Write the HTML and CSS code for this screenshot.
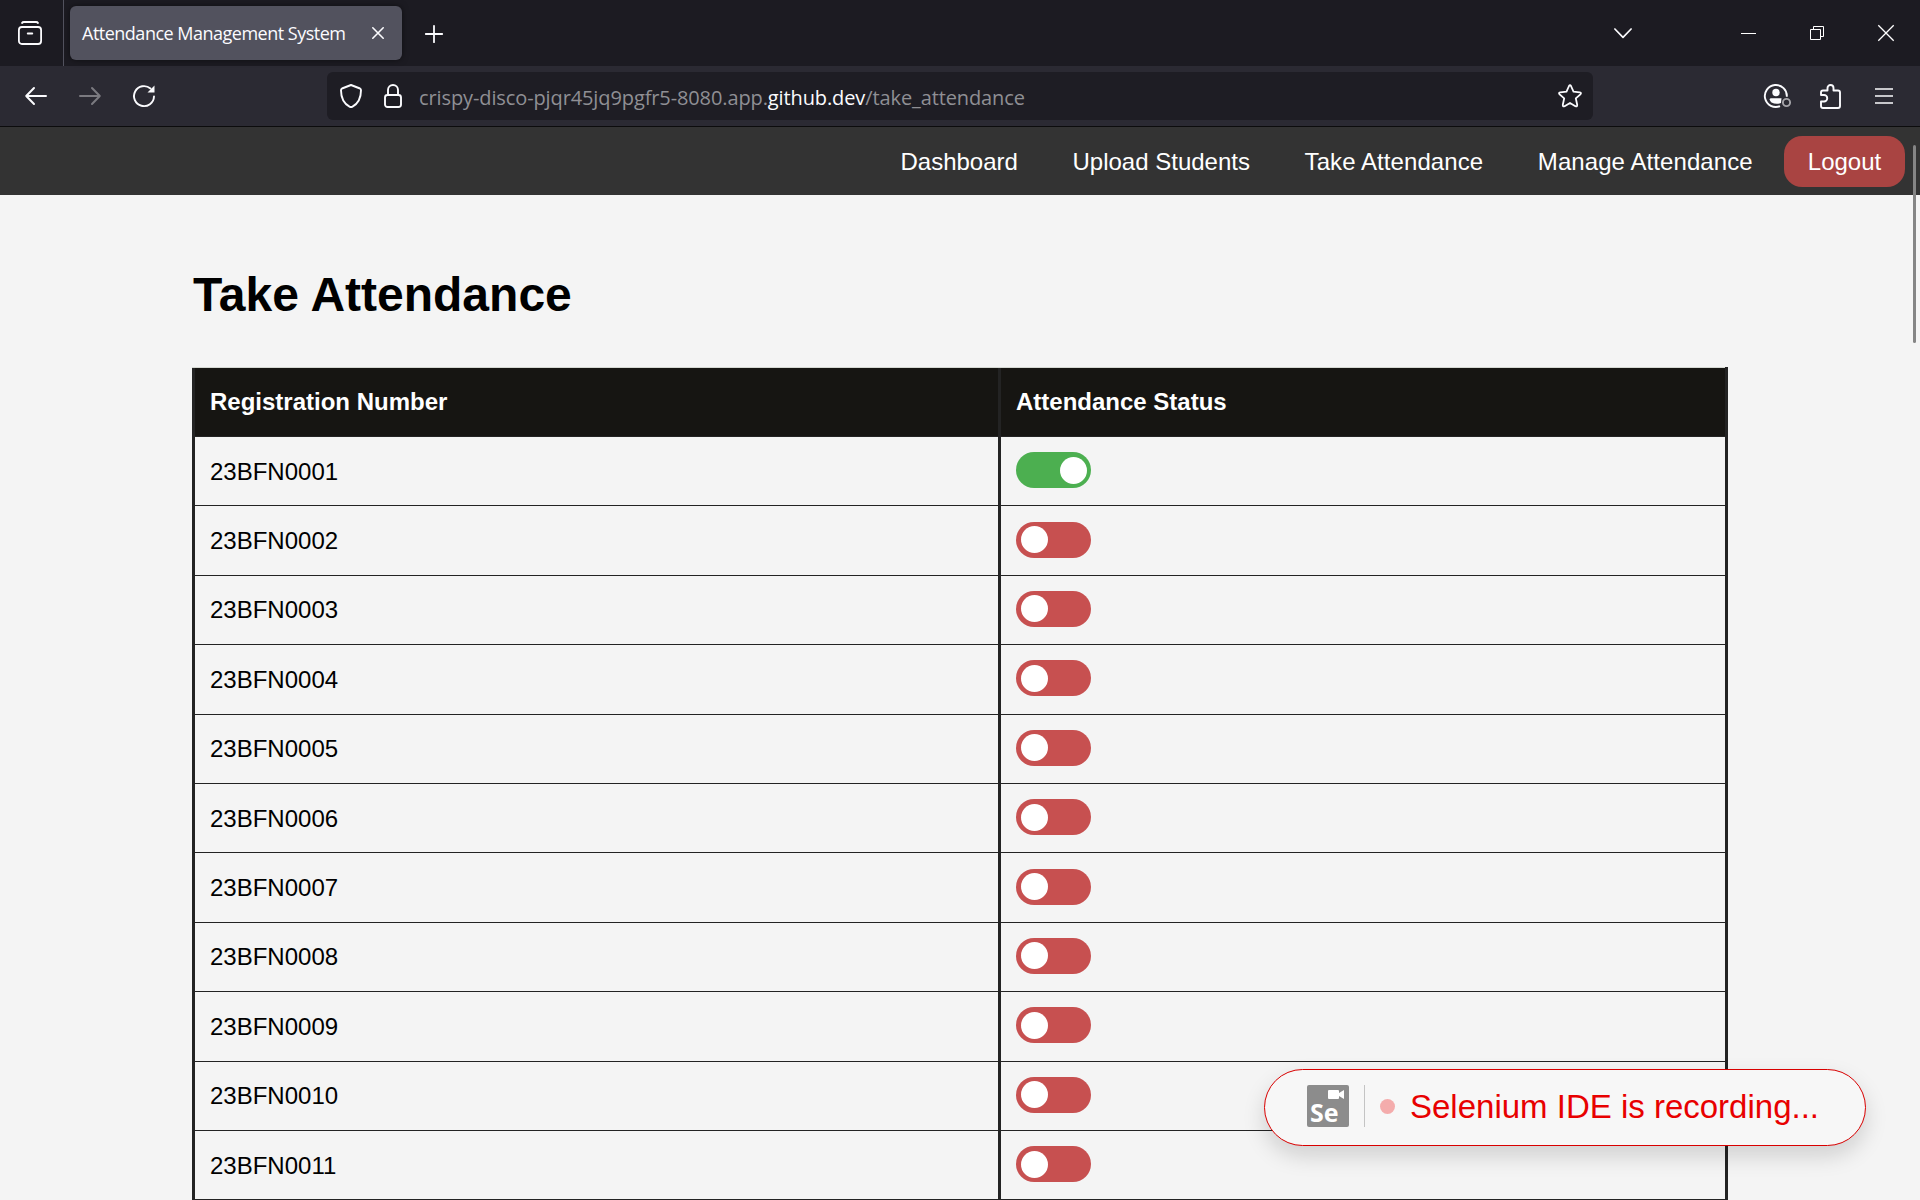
FILE: index.html
```html
<!DOCTYPE html>
<html lang="en">
<head>
<meta charset="utf-8">
<title>Attendance Management System</title>
<link rel="stylesheet" href="styles.css">
</head>
<body>
<div class="tabstrip">
  <div class="overview">
    <svg width="24" height="24" viewBox="0 0 24 24" fill="none" stroke="#fbfbfe" stroke-width="1.8" stroke-linecap="round"><path d="M4 2Q4.500 1 6 1H18Q19.500 1 20 2"/><rect x="0.900" y="6" width="22.200" height="17" rx="3"/><path d="M9.800 12.500H14.200" stroke-width="2"/></svg>
  </div>
  <div class="tab">
    <span class="tab-title">Attendance Management System</span>
    <svg width="12" height="12" viewBox="0 0 12 12" stroke="#fbfbfe" stroke-width="1.600" stroke-linecap="round"><path d="M0.800 0.800L11.200 11.200M11.200 0.800L0.800 11.200"/></svg>
  </div>
  <svg class="newtab" width="18" height="18" viewBox="0 0 18 18" stroke="#fbfbfe" stroke-width="1.800" stroke-linecap="round"><path d="M9 0.800V17.200M0.800 9H17.200"/></svg>
  <div class="window-controls">
    <svg width="18" height="11" viewBox="0 0 18 11" fill="none" stroke="#fbfbfe" stroke-width="1.700" stroke-linecap="round" stroke-linejoin="round"><path d="M0.900 1L9 9.300L17.100 1"/></svg>
    <svg class="minimize" width="15" height="1" viewBox="0 0 15 1"><path d="M0 0H15V1H0Z" fill="#fff"/></svg>
    <svg class="restore" width="14" height="14" viewBox="0 0 14 14" fill="none" stroke="#fff"><path d="M0.500 3.500H10.500V13.500H0.500ZM3.500 3.500V0.500H13.500V10.500H10.500"/></svg>
    <svg class="close" width="16" height="16" viewBox="0 0 16 16" stroke="#fff" stroke-width="1.300"><path d="M0.300 0.300L15.700 15.700M15.700 0.300L0.300 15.700"/></svg>
  </div>
</div>
<div class="toolbar">
  <div class="history">
    <svg width="22" height="18" viewBox="0 0 22 18" fill="none" stroke="#fbfbfe" stroke-width="2" stroke-linecap="round" stroke-linejoin="round"><path d="M21 9H1.200M9 1L1.200 9L9 17"/></svg>
    <svg width="22" height="18" viewBox="0 0 22 18" fill="none" stroke="#7b7a80" stroke-width="2" stroke-linecap="round" stroke-linejoin="round"><path d="M1 9H20.800M13 1L20.800 9L13 17"/></svg>
    <svg width="22" height="22" viewBox="0 0 22 22" fill="none" stroke="#fbfbfe" stroke-width="1.900" stroke-linecap="round"><path d="M21 11.500A10 10 0 1 1 17.500 3.500"/><path d="M21.500 0.500V7.500H14.500Z" fill="#fbfbfe" stroke="none"/></svg>
  </div>
  <div class="urlbar">
    <svg width="22" height="24" viewBox="0 0 22 24" fill="none" stroke="#fbfbfe" stroke-width="1.900" stroke-linejoin="round"><path d="M11 1L20 4.500Q21 5 21 6.200C21 14 18 19.500 12.500 22.600Q11 23.400 9.500 22.600C4 19.500 1 14 1 6.200Q1 5 2 4.500Z"/></svg>
    <svg class="lock" width="18" height="24" viewBox="0 0 18 24" fill="none" stroke="#fbfbfe" stroke-width="1.900"><rect x="1" y="11" width="16" height="12" rx="2.500"/><path d="M4 11V6A5 5 0 0 1 14 6V11"/></svg>
    <div class="url">crispy-disco-pjqr45jq9pgfr5-8080.app.<b>github.dev</b>/take_attendance</div>
    <svg class="star" width="24" height="24" viewBox="0 0 24 24" fill="none" stroke="#fbfbfe" stroke-width="1.800" stroke-linejoin="round"><path d="M11 2Q12 0.200 13 2L15.500 7.700L21.800 8.300Q23.800 8.800 22.400 10.300L17.800 14.400L19.200 20.800Q19.400 23 17.400 22.200L12 18.900L6.600 22.200Q4.600 23 4.800 20.800L6.200 14.400L1.600 10.300Q0.200 8.800 2.200 8.300L8.500 7.700Z"/></svg>
  </div>
  <div class="actions">
    <svg width="28" height="26" viewBox="0 0 28 26" fill="none" stroke="#fbfbfe" stroke-width="1.900"><path d="M16 23.200A11 11 0 1 1 22.800 13.800"/><circle cx="12" cy="9.500" r="3.700" fill="#fbfbfe" stroke="none"/><path d="M5.500 16.300Q6 15.300 7 15.300H17.500L17 20Q12 22 7.500 19.400Q6 18.300 5.500 16.300Z" fill="#fbfbfe" stroke="none"/><circle cx="22.500" cy="19.500" r="3.600" stroke="#a5a4a9"/></svg>
    <svg class="puzzle" width="21" height="25" viewBox="0 0 21 25" fill="none" stroke="#fbfbfe" stroke-width="1.900" stroke-linejoin="round"><path d="M1 11V8.500Q1 6.500 3 6.500H7.500V4A3 3 0 0 1 13.500 4V6.500H18Q20 6.500 20 8.500V22Q20 24 18 24H3Q1 24 1 22V17.500H4A3.200 3.200 0 0 0 4 11Z"/></svg>
    <svg class="menu" width="18" height="16" viewBox="0 0 18 16" stroke="#fbfbfe" stroke-width="1.700"><path d="M0 1H18M0 8H18M0 15H18"/></svg>
  </div>
</div>
<nav class="nav">
  <a>Dashboard</a><a>Upload Students</a><a class="wide">Take Attendance</a><a class="wide">Manage Attendance</a><a class="logout">Logout</a>
</nav>
<main class="content">
  <h1>Take Attendance</h1>
  <div class="sheet">
    <div class="row head"><div>Registration Number</div><div>Attendance Status</div></div>
    <div class="row"><div>23BFN0001</div><div><span class="switch on"></span></div></div>
    <div class="row"><div>23BFN0002</div><div><span class="switch"></span></div></div>
    <div class="row"><div>23BFN0003</div><div><span class="switch"></span></div></div>
    <div class="row"><div>23BFN0004</div><div><span class="switch"></span></div></div>
    <div class="row"><div>23BFN0005</div><div><span class="switch"></span></div></div>
    <div class="row"><div>23BFN0006</div><div><span class="switch"></span></div></div>
    <div class="row"><div>23BFN0007</div><div><span class="switch"></span></div></div>
    <div class="row"><div>23BFN0008</div><div><span class="switch"></span></div></div>
    <div class="row"><div>23BFN0009</div><div><span class="switch"></span></div></div>
    <div class="row"><div>23BFN0010</div><div><span class="switch"></span></div></div>
    <div class="row"><div>23BFN0011</div><div><span class="switch"></span></div></div>
  </div>
</main>
<div class="scroll-thumb"></div>
<div class="recorder">
  <div class="se-logo">
    <svg width="16" height="9" viewBox="0 0 16 9" fill="#fff"><path d="M1 0H10Q11 0 11 1V3L16 0V9L11 6V8Q11 9 10 9H1Q0 9 0 8V1Q0 0 1 0Z"/></svg>
    <span>Se</span>
  </div>
  <div class="rule"></div>
  <div class="dot"></div>
  <span class="message">Selenium IDE is recording...</span>
</div>
</body>
</html>
```
FILE: styles.css
```css
* { box-sizing: border-box; }
body {
  margin: 0;
  height: 1200px;
  overflow: hidden;
  background: #f4f4f4;
  color: #000;
  font: 24px "Liberation Sans", Arial, sans-serif;
}
svg { display: block; flex: none; overflow: visible; }

/* Browser chrome */
.tabstrip {
  display: flex;
  align-items: center;
  height: 66px;
  background: #1c1b22;
}
.overview {
  width: 64px;
  height: 66px;
  padding: 21px 0 0 18px;
  border-right: 1px solid #52525e;
}
.tab {
  display: flex;
  align-items: center;
  justify-content: space-between;
  width: 332px;
  height: 54px;
  margin-left: 6px;
  padding: 0 18px 0 12px;
  border-radius: 6px;
  background: #52525e;
  box-shadow: 0 0 6px rgba(0, 0, 0, .5);
}
.tab-title {
  color: #fbfbfe;
  font: 18px "Open Sans", "Noto Sans", sans-serif;
  letter-spacing: -.5px;
  white-space: nowrap;
}
.newtab { margin: 2px 0 0 23px; }
.window-controls {
  display: flex;
  align-items: center;
  margin-left: auto;
  padding-right: 26px;
}
.minimize { margin-left: 109px; }
.restore { margin-left: 54px; }
.close { margin-left: 54px; }

.toolbar {
  display: flex;
  align-items: center;
  height: 61px;
  border-bottom: 1px solid #0c0c0d;
  background: #2b2a33;
}
.history {
  display: flex;
  align-items: center;
  gap: 32px;
  width: 327px;
  padding-left: 25px;
}
.urlbar {
  display: flex;
  align-items: center;
  width: 1266px;
  height: 48px;
  padding: 0 11px 0 13px;
  border-radius: 6px;
  background: #1e1d24;
}
.lock { margin-left: 22px; }
.url {
  margin: 2px 0 0 17px;
  color: #8f8f94;
  font: 20px "Open Sans", "Noto Sans", sans-serif;
  letter-spacing: -.11px;
  white-space: nowrap;
}
.url b { color: #fbfbfe; font-weight: 400; }
.star { margin-left: auto; }
.actions { display: flex; align-items: center; margin-left: 171px; }
.puzzle { margin-left: 28px; }
.menu { margin-left: 34px; }

/* Site navigation */
.nav {
  display: flex;
  align-items: center;
  justify-content: flex-end;
  height: 68px;
  padding-right: 15px;
  background: #333;
  color: #fff;
}
.nav a { padding: 0 27.300px; line-height: 51px; }
.nav .wide { letter-spacing: .08px; }
.nav .logout {
  width: 121px;
  margin-left: 4px;
  padding: 0;
  border-radius: 18px;
  background: #a94442;
  text-align: center;
}

/* Attendance sheet */
.content { width: 1536px; margin: 0 auto; }
h1 { margin: 0; padding: 72px 0 45px 1px; font-size: 48px; line-height: 55px; }
.sheet { border-right: 3px solid #232323; }
.row {
  display: grid;
  grid-template-columns: 806px 1fr;
  height: 69.400px;
}
.row > div {
  display: flex;
  align-items: center;
  padding: 1px 0 0 15px;
  border-left: 3px solid #232323;
  border-bottom: 1px solid #232323;
}
.row.head {
  height: 70px;
  border-top: 1px solid #d5d8d2;
  color: #fff;
  font-weight: 700;
}
.head > div { padding-top: 0; background: #161512; }
.switch {
  display: flex;
  width: 75px;
  height: 36px;
  margin-bottom: 3px;
  padding: 4.500px;
  border-radius: 18px;
  background: #c75050;
}
.switch::before {
  content: "";
  width: 27px;
  height: 27px;
  border-radius: 50%;
  background: #fff;
}
.switch.on { justify-content: flex-end; background: #4caf50; }

.scroll-thumb {
  position: absolute;
  left: 1913px;
  top: 145px;
  width: 3px;
  height: 198px;
  border-radius: 2px;
  background: #858585;
}

/* Recording notice over the page */
.recorder {
  position: absolute;
  left: 1264px;
  top: 1069px;
  display: flex;
  align-items: center;
  width: 602px;
  height: 77px;
  padding: 0 0 2px 42px;
  border: 1px solid #d90000;
  border-radius: 39px;
  background: #f7f7f7;
  box-shadow: 0 10px 22px rgba(0, 0, 0, .15);
}
.se-logo {
  display: flex;
  flex-direction: column;
  align-items: flex-end;
  width: 42px;
  height: 42px;
  margin-bottom: 2px;
  padding: 5px 5px 0 3px;
  border-radius: 2px;
  background: #8c8c8c;
}
.se-logo span {
  align-self: flex-start;
  color: #fff;
  font: 700 25px/26px "Open Sans", sans-serif;
}
.rule { width: 1px; height: 42px; margin: 0 0 2px 15px; background: #c4c4c4; }
.dot { width: 15px; height: 15px; margin-left: 15px; border-radius: 50%; background: #f4acac; }
.message { margin-left: 15px; color: #e80000; font-size: 33px; white-space: nowrap; }
```
